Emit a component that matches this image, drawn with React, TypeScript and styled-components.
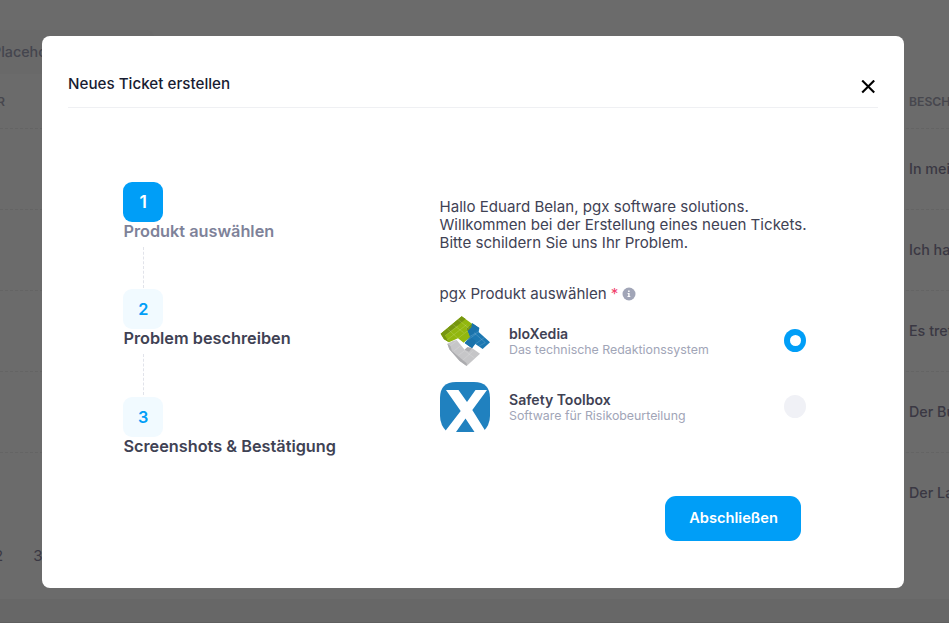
import React from "react";
import styled, { createGlobalStyle } from "styled-components";

const GlobalStyle = createGlobalStyle`
  * { box-sizing: border-box; }
  body {
    margin: 0;
    background: #6b6b6b;
    font-family: Inter, "Liberation Sans", sans-serif;
    color: #3f4254;
    overflow: hidden;
  }
`;

const Page = styled.div`
  position: relative;
  width: 949px;
  height: 623px;
  overflow: hidden;
  display: flex;
  flex-direction: column;
  color: #3a3843;
  font-size: 14px;
`;

const Search = styled.div`
  width: 162px;
  height: 44px;
  margin: 30px 0 0 -8px;
  border-radius: 8px;
  background: #696969;
  color: #44454e;
  font-size: 14.3px;
  font-weight: 500;
  line-height: 44px;
`;

const Row = styled.div<{ $head?: boolean; $last?: boolean }>`
  display: flex;
  justify-content: space-between;
  align-items: center;
  height: ${(p) => (p.$head ? 55 : 81)}px;
  padding-top: ${(p) => (p.$head ? 2 : 0)}px;
  line-height: 20px;
  border-bottom: 1px dashed ${(p) => (p.$last ? "transparent" : "#646464")};
  font-size: ${(p) => (p.$head ? 12.2 : 14.3)}px;
  font-weight: ${(p) => (p.$head ? 600 : 500)};
  color: ${(p) => (p.$head ? "#47474e" : "#3a3843")};
`;

const LeftCell = styled.div`
  margin-left: -3px;
`;

const RightCell = styled.div`
  width: 40px;
  white-space: nowrap;
`;

const Pager = styled.div`
  display: flex;
  gap: 30px;
  margin: 11px 0 0 -6px;
  height: 22px;
  line-height: 22px;
  font-size: 15px;
`;

const Footer = styled.div`
  margin-top: auto;
  height: 24px;
  background: #676767;
  border-bottom: 1px solid #5f5f5f;
`;

const Modal = styled.section`
  position: absolute;
  left: 42px;
  top: 36px;
  width: 862px;
  height: 552px;
  padding: 0 26px;
  border-radius: 8px;
  background: #fff;
  color: #3f4254;
`;

const Header = styled.header`
  display: flex;
  justify-content: space-between;
  height: 72px;
  padding-top: 38px;
  border-bottom: 1px solid #eff0f3;
`;

const Title = styled.h1`
  margin: 0;
  font-size: 15.2px;
  line-height: 20px;
  font-weight: 500;
  color: #181c32;
`;

const Close = styled.button`
  width: 14px;
  height: 14px;
  margin: 6px 3px 0 0;
  padding: 0;
  border: 0;
  background: none;
  svg { display: block; }
`;

const Content = styled.div`
  display: flex;
`;

const Steps = styled.div`
  width: 317px;
  padding: 74px 0 0 55px;
`;

const Step = styled.div`
  height: 107.4px;
`;

const Badge = styled.div<{ $active?: boolean }>`
  width: 40px;
  height: 40px;
  padding-left: 0.5px;
  border-radius: 9px;
  text-align: center;
  line-height: 40px;
  font-weight: 600;
  font-size: ${(p) => (p.$active ? 17.5 : 16.25)}px;
  color: ${(p) => (p.$active ? "#fff" : "#009ef7")};
  background: ${(p) => (p.$active ? "#009ef7" : "#f1faff")};
`;

const StepTitle = styled.div<{ $active?: boolean }>`
  margin-left: 0.4px;
  line-height: 18px;
  font-size: 16.3px;
  font-weight: 600;
  color: ${(p) => (p.$active ? "#7e8299" : "#3f4254")};
  white-space: nowrap;
`;

const Connector = styled.div`
  width: 0;
  height: 41px;
  margin: 7px 0 0 20px;
  border-left: 1px dashed #e1e3ea;
`;

const Form = styled.div`
  width: 367px;
  margin-left: 55px;
  padding-top: 90px;
`;

const Intro = styled.p`
  margin: 0 0 0 -0.5px;
  font-size: 15.1px;
  line-height: 18px;
  white-space: nowrap;
`;

const Label = styled.div`
  display: flex;
  align-items: center;
  height: 20px;
  margin: 31px 0 0 -0.5px;
  font-size: 15.1px;
  svg { margin: 1px 0 0 3.5px; }
`;

const Required = styled.span`
  margin-left: 4px;
  color: #f1416c;
`;

const Option = styled.label`
  display: flex;
  align-items: center;
  height: 50px;
  margin-top: 16px;
  &:first-of-type { margin-top: 13px; }
`;

const OptionText = styled.div`
  flex: 1;
  margin-left: 19px;
`;

const OptionName = styled.div`
  font-size: 14.05px;
  line-height: 17px;
  font-weight: 600;
`;

const OptionNote = styled.div`
  font-size: 12.36px;
  line-height: 15px;
  color: #a1a5b7;
`;

const Radio = styled.span<{ $checked?: boolean }>`
  display: flex;
  align-items: center;
  justify-content: center;
  width: 22px;
  height: 23px;
  margin: 0 1px 1px 0;
  border-radius: 50%;
  background: ${(p) => (p.$checked ? "#009ef7" : "#f0f1f6")};
  &::after {
    content: "";
    width: 11px;
    height: 11px;
    border-radius: 50%;
    background: ${(p) => (p.$checked ? "#fff" : "transparent")};
  }
`;

const Submit = styled.button`
  display: block;
  width: 136px;
  height: 45px;
  margin: 64px 0 0 225px;
  padding: 0 0 1px 1px;
  border: 0;
  border-radius: 11px;
  background: #009ef7;
  color: #fff;
  font: 600 14.65px Inter, sans-serif;
`;

const BloxediaLogo = () => (
  <svg width="50" height="50" viewBox="12 12 150 150">
    <path d="M92 50 L109 34 L130 48 L128 60 L162 91 L140 111 L118 96 L108 109 L86 93 L100 75Z" fill="#1c78b2" />
    <path d="M92 50 L109 34 L130 48 L114 62 L102 73Z M86 93 L104 76 L120 88 L108 109Z" fill="#1a72aa" />
    <path d="M14 65 L77 13 L108 35 L92 50 L102 75 L83 92 L66 79 L39 91 L24 82Z" fill="#92b70e" />
    <path d="M14 65 L77 13 L89 21 L27 71 L39 91 L24 82Z M92 50 L108 35 L106 46 L95 57Z" fill="#779610" />
    <path d="M34 95 L52 86 L62 84 L86 113 L94 106 L108 108 L132 125 L92 162 L71 147 L40 112Z" fill="#c6c6c8" />
    <path d="M34 95 L43 101 L48 117 L92 154 L92 162 L71 147 L40 112Z M86 113 L94 106 L108 108 L99 119Z" fill="#acacaf" />
    <g fill="none" stroke="#fff" strokeOpacity=".35" strokeWidth="1.3">
      <path d="M27 71 L66 42 M49 36 L83 62 M66 23 L99 49 M34 50 L66 79 M33 84 L92 38 M66 79 L94 57" />
      <path d="M102 73 L128 60 M95 84 L120 66 M114 62 L148 92 L128 103 M118 96 L146 76" />
      <path d="M43 101 L62 87 M54 117 L74 101 M67 130 L86 116 L115 138 M80 145 L110 118" />
    </g>
  </svg>
);

const ToolboxLogo = () => (
  <svg width="50" height="50" viewBox="0 0 50 50">
    <path d="M16 0H34Q50 0 50 16V34Q50 43 43 50H7Q0 43 0 34V16Q0 0 16 0Z" fill="#2081bf" />
    <path d="M6 8H18.5L27 20L35.5 8H47L32.3 28L46 50H34.5L25.5 36.5L16 50H4.5L20.7 29Z" fill="#fff" />
  </svg>
);

const InfoIcon = () => (
  <svg width="14" height="14" viewBox="0 0 14 14">
    <circle cx="7" cy="7" r="6.5" fill="#a1a5b7" />
    <path d="M6.1 3.6H7.6V4.9H6.1Z M5.6 5.9H7.6V9H8.3V10H5.5V9H6.2V6.9H5.6Z" fill="#fff" />
  </svg>
);

const descriptions = ["In meinem", "Ich habe", "Es treten", "Der Button", "Der Laden"];
const steps = ["Produkt auswählen", "Problem beschreiben", "Screenshots & Bestätigung"];
const products = [
  { name: "bloXedia", note: "Das technische Redaktionssystem", logo: <BloxediaLogo /> },
  { name: "Safety Toolbox", note: "Software für Risikobeurteilung", logo: <ToolboxLogo /> },
];

export default function App() {
  return (
    <>
      <GlobalStyle />
      <Page>
        <Search>Placeholder</Search>
        <Row $head>
          <LeftCell>R</LeftCell>
          <RightCell>BESCHREIBUNG</RightCell>
        </Row>
        {descriptions.map((text, i) => (
          <Row key={text} $last={i === 4}>
            <LeftCell />
            <RightCell>{text}</RightCell>
          </Row>
        ))}
        <Pager>
          <span>2</span>
          <span>3</span>
        </Pager>
        <Footer />
        <Modal role="dialog">
          <Header>
            <Title>Neues Ticket erstellen</Title>
            <Close aria-label="Schließen">
              <svg width="14" height="14" viewBox="0 0 14 14">
                <path d="M1.2 .5L13.2 12.5M13.2 .5L1.2 12.5" stroke="#000" strokeWidth="2.1" />
              </svg>
            </Close>
          </Header>
          <Content>
            <Steps>
              {steps.map((title, i) => (
                <Step key={title}>
                  <Badge $active={i === 0}>{i + 1}</Badge>
                  <StepTitle $active={i === 0}>{title}</StepTitle>
                  {i < 2 && <Connector />}
                </Step>
              ))}
            </Steps>
            <Form>
              <Intro>
                Hallo Eduard Belan, pgx software solutions.
                <br />
                Willkommen bei der Erstellung eines neuen Tickets.
                <br />
                Bitte schildern Sie uns Ihr Problem.
              </Intro>
              <Label>
                pgx Produkt auswählen<Required>*</Required>
                <InfoIcon />
              </Label>
              {products.map((p, i) => (
                <Option key={p.name}>
                  {p.logo}
                  <OptionText>
                    <OptionName>{p.name}</OptionName>
                    <OptionNote>{p.note}</OptionNote>
                  </OptionText>
                  <Radio $checked={i === 0} />
                </Option>
              ))}
              <Submit>Abschließen</Submit>
            </Form>
          </Content>
        </Modal>
      </Page>
    </>
  );
}
